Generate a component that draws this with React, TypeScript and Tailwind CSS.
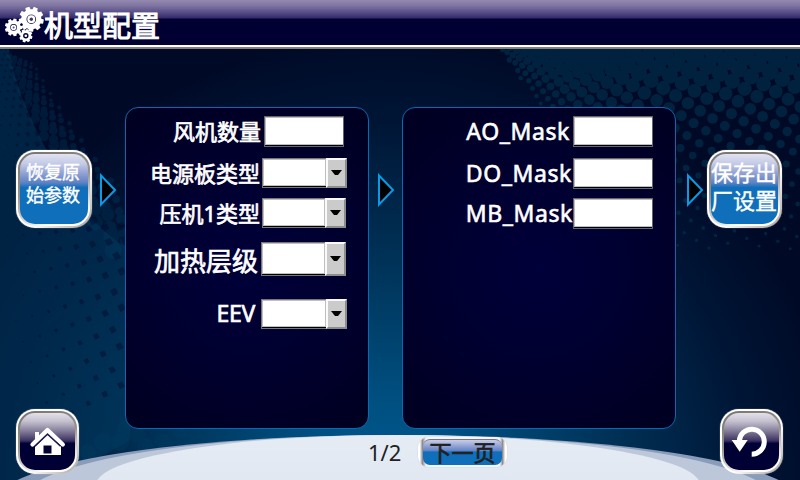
import type { ReactNode } from "react";

type Dot = { x: number; y: number; r: number };

// Halftone field in the upper right: merged at the top, thinning out downwards.
function rightDots(): Dot[] {
  const dots: Dot[] = [];
  for (let i = -40; i < 50; i++) {
    for (let j = -40; j < 50; j++) {
      const ux = 702 + i * 12.3 - j * 6.6;
      const y = 46 + i * 7.6 + j * 12.4;
      if (y < 34 || y > 250 || ux > 815) continue;
      // Columns squeeze together towards the left end.
      const x = ux > 640 ? ux : 480 + 160 * Math.exp((ux - 640) / 170);
      const edge = 498 + (y - 48) * 0.75;
      if (x < edge) continue;
      const squeeze = Math.min(1, (x - 470) / 170);
      const fade = Math.min(1, (x - edge) / 40);
      const size = 10.3 * Math.exp(-(y - 50) / 105);
      const r = Math.min(size, 9.6) * (0.4 + 0.6 * squeeze) * (0.5 + 0.5 * fade);
      if (r > 0.4) dots.push({ x, y, r });
    }
  }
  return dots;
}

// Horizontal position of the arc that sweeps down from the title bar.
function arcX(y: number) {
  return 8 + Math.pow(Math.max(0, y - 48) / 182, 1.3) * 92;
}

// Left field, inside the arc: small dark diamonds, growing towards the right.
function leftDiamonds(): Dot[] {
  const marks: Dot[] = [];
  const rows = [232, 249.7, 268, 288, 309.7, 331, 353, 375.7, 398.7, 422];
  const phase = [4.7, 8.3, 15.8, 4.7, 13.5, 4.5, 12, 2.3, 11.5, 4];
  rows.forEach((rowY, k) => {
    const slope = -0.09 - k * 0.051;
    for (let n = 0; n < 9; n++) {
      const x = phase[k] + n * 16.4 - 14;
      const y = rowY + (x - 54.3) * slope;
      const r = 0.4 + x * 0.036 - k * 0.08;
      if (x < 0 || x > 130 || y > 426 || r < 0.6) continue;
      marks.push({ x, y, r });
    }
  });
  // Above the regular rows the pitch tightens and the marks hug the arc.
  let y = 220;
  let odd = 0;
  while (y > 49) {
    const pitch = 4.5 + (y - 48) * 0.06;
    for (let x = arcX(y); x > 0; x -= pitch) {
      const px = x - odd * pitch * 0.5;
      const d = arcX(y) - px;
      const r = pitch * 0.36 * (1 - d / (26 + (y - 48) * 0.3));
      if (r > 0.5) marks.push({ x: px, y: y + d * 0.05, r });
    }
    y -= pitch;
    odd = 1 - odd;
  }
  return marks;
}

// Loose discs just outside the arc and under the left panel.
function leftDiscs(): Dot[] {
  const dots: Dot[] = [];
  let y = 56;
  let odd = 0;
  while (y < 262) {
    const pitch = 5 + (y - 48) * 0.055;
    for (let n = 0; n < 5; n++) {
      const x = arcX(y) + (n + odd * 0.5) * pitch;
      const r = pitch * (0.54 - n * 0.07);
      if (x < 128) dots.push({ x, y: y + n * pitch * 0.35, r });
    }
    y += pitch * 0.92;
    odd = 1 - odd;
  }
  const low: [number, number, number][] = [
    [103, 442, 9],
    [120, 442, 9],
    [137, 435, 8],
    [145, 446, 8],
    [163, 441, 8],
    [179, 433, 7],
    [196, 440, 6],
    [126, 427, 8],
    [88, 452, 8],
  ];
  for (const [cx, cy, r] of low) dots.push({ x: cx, y: cy, r });
  return dots;
}

const RIGHT = rightDots();
const DIAMONDS = leftDiamonds();
const DISCS = leftDiscs();

function Backdrop() {
  return (
    <svg className="absolute inset-0 h-full w-full" viewBox="0 0 800 480" preserveAspectRatio="none">
      <defs>
        <radialGradient id="glow" gradientUnits="userSpaceOnUse" cx="385" cy="490" r="460">
          <stop offset="0" stopColor="#005c92" />
          <stop offset="0.2" stopColor="#004f80" />
          <stop offset="0.5" stopColor="#003257" />
          <stop offset="0.8" stopColor="#001535" />
          <stop offset="1" stopColor="#000926" />
        </radialGradient>
        <linearGradient id="dome" x1="0" y1="0" x2="0" y2="1">
          <stop offset="0" stopColor="#e6ecf4" />
          <stop offset="1" stopColor="#dde3ee" />
        </linearGradient>
      </defs>
      <rect width="800" height="480" fill="url(#glow)" />
      <g opacity="0.6" fill="#003350">
        {RIGHT.map((d, i) => (
          <circle key={i} cx={d.x} cy={d.y} r={d.r} />
        ))}
      </g>
      <path
        d="M0 49H9C16 92 38 140 74 196C92 222 108 236 130 250V440L60 480H0Z"
        fill="#003f64"
        opacity="0.48"
      />
      <g opacity="0.35" fill="#003c60">
        {DISCS.map((d, i) => (
          <circle key={i} cx={d.x} cy={d.y} r={d.r} />
        ))}
      </g>
      <g opacity="0.48" fill="#000c2e">
        {DIAMONDS.map((d, i) => (
          <path
            key={i}
            d={`M${d.x - d.r} ${d.y - d.r * 0.4}L${d.x + d.r * 0.2} ${d.y - d.r}L${d.x + d.r} ${d.y + d.r * 0.3}L${d.x - d.r * 0.3} ${d.y + d.r}Z`}
          />
        ))}
      </g>
      <ellipse cx="398" cy="500" rx="400" ry="65" fill="#8b9cba" />
      <ellipse cx="398" cy="500" rx="376" ry="65" fill="#bcc8da" />
      <ellipse cx="398" cy="485" rx="302" ry="50" fill="url(#dome)" />
    </svg>
  );
}

function gearPath(cx: number, cy: number, r: number, teeth: number, hole: number, turn: number) {
  const pts: string[] = [];
  for (let i = 0; i < teeth; i++) {
    const a = turn + (i * 2 * Math.PI) / teeth;
    const s = (2 * Math.PI) / teeth;
    const steps: [number, number][] = [
      [-0.36, 0.8],
      [-0.24, 1],
      [0.24, 1],
      [0.36, 0.8],
    ];
    for (const [o, k] of steps) {
      pts.push(`${(cx + Math.cos(a + o * s) * r * k).toFixed(2)} ${(cy + Math.sin(a + o * s) * r * k).toFixed(2)}`);
    }
  }
  return `M${pts.join("L")}ZM${cx - hole} ${cy}a${hole} ${hole} 0 1 0 ${hole * 2} 0a${hole} ${hole} 0 1 0 ${-hole * 2} 0Z`;
}

function Gears() {
  return (
    <svg className="h-[45px] w-[45px] shrink-0" viewBox="0 0 45 45" fill="#fff" fillRule="evenodd">
      <path d={gearPath(31.3, 19.2, 12.6, 9, 4.8, 0.2)} />
      <circle cx="31.3" cy="19.2" r="4" />
      <circle cx="31.3" cy="19.2" r="1.7" fill="#3d376e" />
      <path d={gearPath(13.6, 27.4, 8.9, 9, 3.3, 0)} />
      <circle cx="13.6" cy="27.4" r="2.7" />
      <circle cx="13.6" cy="27.4" r="1" fill="#55507f" />
      <path d={gearPath(25.8, 35.7, 6.8, 8, 2.7, 0.3)} />
      <circle cx="25.8" cy="35.7" r="1.3" />
    </svg>
  );
}

function Arrow() {
  return (
    <svg className="h-9 w-[18px] shrink-0" viewBox="0 0 18 36">
      <path d="M2 3.500V32.500L16 18Z" fill="#000" stroke="#0a9be6" strokeWidth="2" />
    </svg>
  );
}

function GlossButton({ tone, className, children }: { tone: "blue" | "navy"; className: string; children: ReactNode }) {
  const fill =
    tone === "blue"
      ? "bg-[linear-gradient(180deg,#e2e2f1_0%,#c3cae6_14%,#8fa0d2_28%,#5f82c4_41%,#0f6fba_48%,#0f6fba_100%)]"
      : "bg-[linear-gradient(180deg,#e4e1ea_0%,#c4bfce_15%,#8b849f_30%,#3d3562_48%,#221a50_51%,#000035_53%,#000035_100%)]";
  return (
    <button
      className={`shrink-0 rounded-[19px] bg-[linear-gradient(135deg,#ffffff_0%,#ffffff_60%,#a8a19c_100%)] p-[2px] shadow-[0_0_1px_#cfcac6] ${className}`}
    >
      <span className="block h-full w-full rounded-[17px] bg-[linear-gradient(160deg,#77736f_0%,#96918d_45%,#ffffff_85%)] p-[2px]">
        <span className={`flex h-full w-full items-center justify-center rounded-[15px] ${fill}`}>{children}</span>
      </span>
    </button>
  );
}

function Label({ children, className }: { children: ReactNode; className: string }) {
  return (
    <span className={`flex items-center justify-end whitespace-nowrap text-white ${className}`}>{children}</span>
  );
}

function Field() {
  return (
    <span className="h-[31px] w-20 shrink-0 border border-[#66666a] bg-[#00000c] pb-[1px]">
      <span className="block h-full w-full border border-r-0 border-[#bdbdbd] bg-white" />
    </span>
  );
}

function Select({ className }: { className: string }) {
  return (
    <span className={`flex shrink-0 border border-r-0 border-[#77777a] bg-black ${className}`}>
      <span className="mb-px flex-1 border border-[#c0c0c0] bg-white" />
      <span className="-my-px flex w-[21px] items-center justify-center border-2 border-l-2 border-[#fafafa] border-r-[#8d8d8d] border-b-[#8d8d8d] bg-[#cbcbcb]">
        <svg className="h-[6px] w-[11px]" viewBox="0 0 11 6">
          <path d="M0 0h11L7 5H4Z" fill="#000" />
        </svg>
      </span>
    </span>
  );
}

export default function App() {
  return (
    <div className="relative flex h-[480px] w-[800px] flex-col overflow-hidden bg-[#000926] font-['Noto_Sans','Noto_Sans_CJK_SC',sans-serif]">
      <Backdrop />

      <header className="relative flex h-[49px] shrink-0 border-b-2 border-[#827f7c] bg-[linear-gradient(180deg,#9489b0_0px,#7d73a0_6px,#5a5088_12px,#332a69_18px,#000033_19px,#000033_45px,#ffffff_45px)]">
        <Gears />
        <h1 className="-ml-px text-[29px] leading-[48px] text-white [-webkit-text-stroke:1px_white] [font-family:'Noto_Sans_CJK_SC',sans-serif]">
          机型配置
        </h1>
      </header>

      <main className="relative flex h-[380px] shrink-0 items-start pt-[58px] pl-4">
        <GlossButton tone="blue" className="mt-[43px] h-[78px] w-[76px]">
          <span className="-mt-[10px] -ml-[2px] w-[54px] text-[18px] leading-[23px] text-white [-webkit-text-stroke:0.4px_white]">恢复原始参数</span>
        </GlossButton>
        <span className="mt-[65px] ml-[7px] flex"><Arrow /></span>

        <section className="ml-[8px] flex h-[322px] w-[244px] shrink-0 flex-col rounded-[13px] border border-[#0a69b0] bg-[radial-gradient(circle_at_50%_50%,#00003a_0%,#000030_45%,#000020_100%)] pt-2 [-webkit-text-stroke:0.7px_white]">
          <div className="flex">
            <Label className="h-[31px] w-[135px] pb-[2px] text-[22px] leading-[30px]">风机数量</Label>
            <span className="ml-[3px] flex"><Field /></span>
          </div>
          <div className="mt-[11px] flex">
            <Label className="w-[134px] text-[22px] leading-[30px]">电源板类型</Label>
            <Select className="ml-[2px] h-[30px] w-[85px]" />
          </div>
          <div className="mt-[10px] flex">
            <Label className="w-[134px] text-[22px] leading-[30px]">压机1类型</Label>
            <Select className="ml-[2px] h-[30px] w-[84px]" />
          </div>
          <div className="mt-[14px] flex">
            <Label className="h-[34px] w-[132px] pt-[3px] text-[26px] leading-[34px]">加热层级</Label>
            <Select className="ml-[3px] h-[34px] w-[85px]" />
          </div>
          <div className="mt-[23px] flex">
            <Label className="h-[30px] w-[129px] pb-[3px] text-[23px] leading-[30px] tracking-[-0.3px]">EEV</Label>
            <Select className="ml-[6px] h-[30px] w-[86px]" />
          </div>
        </section>

        <span className="mt-[65px] ml-[8px] flex"><Arrow /></span>

        <section className="ml-[7px] flex h-[322px] w-[274px] shrink-0 flex-col rounded-[13px] border border-[#0a69b0] bg-[radial-gradient(circle_at_50%_50%,#00003a_0%,#000030_45%,#000020_100%)] pt-2 [-webkit-text-stroke:0.6px_white]">
          <div className="flex">
            <Label className="h-[31px] w-[167px] pb-[2px] text-[23px] leading-[30px] tracking-[0.6px]">AO_Mask</Label>
            <span className="ml-[3px] flex"><Field /></span>
          </div>
          <div className="mt-[11px] flex">
            <Label className="h-[31px] w-[169px] pb-[2px] text-[23px] leading-[30px] tracking-[0.6px]">DO_Mask</Label>
            <span className="ml-[1px] flex"><Field /></span>
          </div>
          <div className="mt-[9px] flex">
            <Label className="h-[31px] w-[170px] pb-[2px] text-[23px] leading-[30px] tracking-[0.6px]">MB_Mask</Label>
            <Field />
          </div>
        </section>

        <span className="mt-[65px] ml-[10px] flex"><Arrow /></span>
        <GlossButton tone="blue" className="mt-[43px] ml-[3px] h-[78px] w-[75px]">
          <span className="-mt-[6px] -ml-px w-[66px] text-[22px] leading-[28px] text-white [-webkit-text-stroke:0.4px_white]">保存出厂设置</span>
        </GlossButton>
      </main>

      <footer className="relative -mt-5 flex h-[71px] items-start pl-4">
        <GlossButton tone="navy" className="h-[65px] w-[63px]">
          <svg className="h-[57px] w-[55px]" viewBox="0 0 55 57" fill="#fff">
            <path d="M15 19h4v7l-4 4Z" />
            <path
              d="M12.500 31.500 27.500 17 42.800 31.500"
              fill="none"
              stroke="#fff"
              strokeWidth="4.300"
              strokeLinecap="round"
              strokeLinejoin="round"
            />
            <path d="M15 33.500 27.500 21.500 41 33.500V42H15ZM23.500 32.500v8h8v-8Z" fillRule="evenodd" />
            <path d="M15 33.200 27.500 21.200 40.500 33.200" fill="none" stroke="#1a1246" strokeWidth="1.200" />
          </svg>
        </GlossButton>
        <span className="mt-[28px] ml-[289px] w-[34px] text-[22px] leading-[30px] text-[#202020]">1/2</span>
        <button className="mt-7 ml-4 h-[30px] w-[89px] shrink-0 rounded-[11px] bg-[linear-gradient(90deg,#ffffff_0%,#ffffff_2%,#8f8b8d_5%,#f5f5f5_9%,#f5f5f5_92%,#8f8b8d_95%,#ffffff_98%)] px-[5px] py-[2px] shadow-[0_0_1px_#b5b0ae]">
          <span className="flex h-full items-center justify-center rounded-[7px] border-t border-[#77747c] bg-[linear-gradient(180deg,#c9cee8_0%,#8ea1d3_25%,#6684c5_42%,#0f6fba_48%,#0f6fba_100%)] text-[22px] text-[#202020] [-webkit-text-stroke:0.7px_#202020]">
            下一页
          </span>
        </button>
        <GlossButton tone="navy" className="ml-[213px] h-[65px] w-[63px]">
          <svg className="h-[57px] w-[55px]" viewBox="0 0 55 57">
            <path d="M15.300 28A12.500 12.500 0 1 1 27.700 41.200" fill="none" stroke="#fff" strokeWidth="5" />
            <path d="M7.700 27h16L15.700 38.700Z" fill="#fff" />
          </svg>
        </GlossButton>
      </footer>
    </div>
  );
}
